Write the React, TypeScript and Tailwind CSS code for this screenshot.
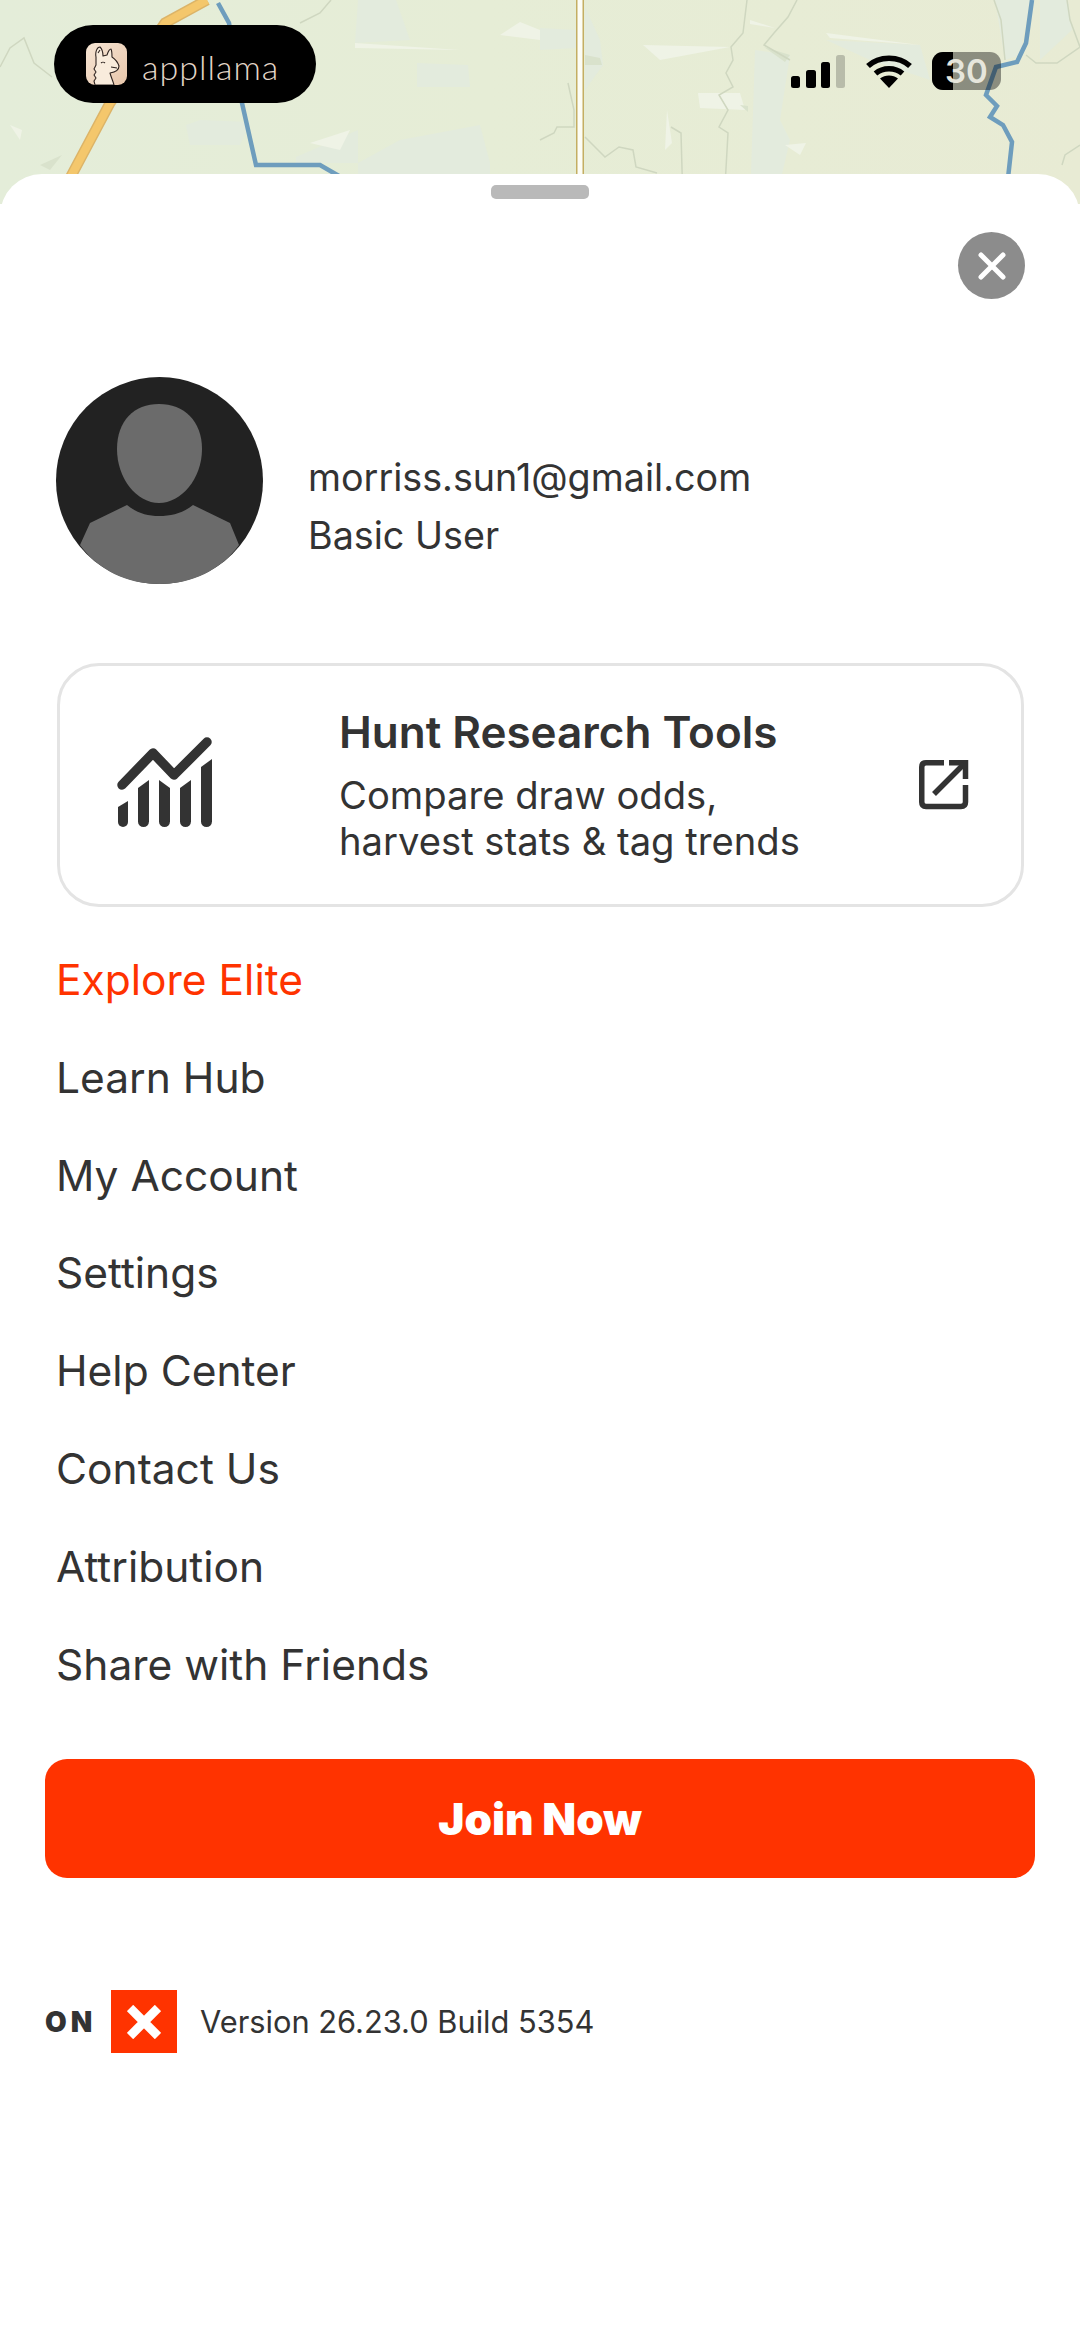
import React from "react";

const font = { fontFamily: "Inter, 'Liberation Sans', sans-serif" };
const items = ["Learn Hub", "My Account", "Settings", "Help Center", "Contact Us", "Attribution", "Share with Friends"];

function MapArt() {
  return (
    <svg className="absolute inset-0 w-full h-full" viewBox="0 0 1080 204" fill="none">
      <defs>
        <linearGradient id="mapbg" x1="0" y1="0" x2="1" y2="0">
          <stop offset="0" stopColor="#e4edd9" />
          <stop offset="0.45" stopColor="#e6edd6" />
          <stop offset="1" stopColor="#e8ebd4" />
        </linearGradient>
      </defs>
      <rect width="1080" height="204" fill="url(#mapbg)" />
      <g fill="#e3ebdd">
        <path d="M358 0L396 0L410 40L355 43Z" />
        <path d="M417 63L468 65L470 87L417 87Z" />
        <path d="M186 125L200 120L250 122L240 145L190 145Z" />
        <path d="M296 157L358 130L358 163L296 163Z" />
        <path d="M358 163L400 140L480 125L490 163L490 204L358 204Z" />
        <path d="M540 28L576 30L576 48L540 50Z" />
        <path d="M585 7L600 40L603 65L585 90Z" />
        <path d="M755 50L790 55L780 120L790 140L775 204L750 204Z" />
        <path d="M826 40L920 45L930 80L870 60Z" />
        <path d="M995 0L1030 0L1020 55L1005 60Z" />
        <path d="M1040 0L1068 0L1072 30L1040 60Z" />
      </g>
      <g fill="#eff3e6">
        <path d="M355 43L460 50L355 48Z" />
        <path d="M310 143L350 130L340 150Z" />
        <path d="M500 35L520 22L540 30L540 40Z" />
        <path d="M643 45L730 47L660 60Z" />
        <path d="M698 93L740 93L745 110L700 108Z" />
        <path d="M667 110L672 143L665 150Z" />
        <path d="M785 145L806 143L800 155Z" />
        <path d="M826 33L920 45L830 38Z" />
        <path d="M750 20L775 28L750 24Z" />
        <path d="M10 125L22 130L20 140Z" />
      </g>
      <g fill="#d9e2cc">
        <path d="M585 55L600 58L602 65L585 65Z" />
        <path d="M764 47L790 55L785 62Z" />
        <path d="M740 105L748 106L748 112Z" />
        <path d="M40 165L62 155L50 170Z" />
      </g>
      <g stroke="#cfd7c0" strokeWidth="1.500">
        <path d="M0 67L10 48L24 38L34 63L52 77" />
        <path d="M331 0L320 13L300 23" />
        <path d="M797 0L788 17L774 33L764 45L790 60" />
        <path d="M747 0L743 33L731 47L733 60L726 73L733 87L719 95L728 110L719 127L728 133L724 204" />
        <path d="M568 83L574 110L574 127L557 127L554 133L540 140" />
        <path d="M585 137L605 157L619 147L633 150L636 167L657 173" />
        <path d="M671 127L681 133L683 204" />
        <path d="M994 0L1001 20L1005 60" />
        <path d="M1067 0L1070 20L1080 47L1057 63L1036 63L1026 55" />
        <path d="M1080 145L1065 155L1062 165" />
      </g>
      <path d="M207 0L165 23L110 103L69 180" stroke="#dcb468" strokeWidth="11" />
      <path d="M207 0L165 23L110 103L69 180" stroke="#f4c76c" strokeWidth="8" />
      <path d="M218 3L229 23L242 103L256 165L320 165L339 176" stroke="#6e9dbd" strokeWidth="4.500" />
      <path d="M1032 0L1026 43L1017 62L996 67L986 95L997 106L990 117L1003 125L1012 142L1008 178" stroke="#6e9dbd" strokeWidth="4.500" />
      <rect x="577" y="0" width="6" height="204" fill="#fdfdf6" />
      <rect x="576" y="0" width="1.500" height="204" fill="#c4ae62" />
      <rect x="582.500" y="0" width="1.500" height="204" fill="#c4ae62" />
    </svg>
  );
}

function LlamaIcon() {
  return (
    <svg width="41" height="42" viewBox="0 0 41 42" className="rounded-[9px] shrink-0">
      <defs>
        <linearGradient id="ll" x1="0" y1="0" x2="1" y2="1">
          <stop offset="0" stopColor="#f7e6d4" />
          <stop offset="1" stopColor="#e8c6ab" />
        </linearGradient>
      </defs>
      <rect width="41" height="42" fill="url(#ll)" />
      <path d="M9 42L8 38L10 35L8 32L10 29L8 26L10 22L10 14C9 9 11 4 14 4C16 6 17 10 17 13L21 12C22 9 24 6 25 6C26 8 26 11 26 14C29 16 32 20 33 23C33 27 30 29 24 30C25 34 27 38 28 42Z" fill="#f9ecdc" stroke="#2f2420" strokeWidth="1.100" strokeLinejoin="round" />
      <path d="M15 20C16 19 18 19 19 20M25 24L31 25M12 10L14 7" stroke="#2f2420" strokeWidth="1.100" fill="none" />
    </svg>
  );
}

function Signal() {
  return (
    <svg width="54" height="34" viewBox="0 0 54 34" className="mr-[21px] mt-[2px] shrink-0">
      <rect x="0" y="22" width="9" height="12" rx="2.500" fill="#000" />
      <rect x="15" y="16" width="10" height="18" rx="2.500" fill="#000" />
      <rect x="30" y="8" width="9" height="26" rx="2.500" fill="#000" />
      <rect x="45" y="1" width="9" height="33" rx="2.500" fill="#000" fillOpacity="0.2" />
    </svg>
  );
}

function Wifi() {
  return (
    <svg width="46" height="34" viewBox="0 0 46 34" className="mr-[20px] mt-[2px] shrink-0" fill="none">
      <path d="M2 12C13 1.500 33 1.500 44 12" stroke="#000" strokeWidth="5.500" />
      <path d="M9.500 19.500C17 13 29 13 36.500 19.500" stroke="#000" strokeWidth="5.500" />
      <path d="M14 24.500C19 20.500 27 20.500 32 24.500L23 34Z" fill="#000" />
    </svg>
  );
}

function ChartIcon() {
  return (
    <svg width="100" height="100" viewBox="0 -5 100 100" fill="#333333">
      <path d="M7 45L38 13L59 35L92 2" fill="none" stroke="#333333" strokeWidth="9.500" strokeLinecap="round" strokeLinejoin="round" />
      <path d="M3 67L13 61V82a5 5 0 0 1-10 0Z" />
      <path d="M23 48L34 40V81.500a5.500 5.500 0 0 1-11 0Z" />
      <path d="M44 40L55 48V81.500a5.500 5.500 0 0 1-11 0Z" />
      <path d="M65 48L76 40V81.500a5.500 5.500 0 0 1-11 0Z" />
      <path d="M86 27L97 19V81.500a5.500 5.500 0 0 1-11 0Z" />
    </svg>
  );
}

function ExternalIcon() {
  return (
    <svg width="50" height="50" viewBox="0 0 50 50" fill="none" stroke="#333333" strokeWidth="5.500">
      <path d="M25 2.750H7Q2.750 2.750 2.750 7V42Q2.750 46.500 7 46.500H42Q46.500 46.500 46.500 42V25" />
      <path d="M30 2.750H46.500V19" />
      <path d="M15 34L45 4" />
    </svg>
  );
}

export default function App() {
  return (
    <div className="relative flex flex-col w-[1080px] h-[2337px] overflow-hidden bg-white text-[#333333]" style={font}>
      <div className="relative h-[204px] shrink-0">
        <MapArt />
        <div className="relative flex justify-between pt-[25px] pl-[54px] pr-[79px]">
          <div className="flex items-center h-[78px] w-[262px] rounded-[39px] bg-black pl-[32px]">
            <LlamaIcon />
            <span className="ml-[15px] pt-[5px] text-[#e3d6c8] text-[34px] leading-none font-light tracking-[1px]" style={{ fontFamily: "Lato, sans-serif" }}>appllama</span>
          </div>
          <div className="flex items-start pt-[27px]">
            <Signal />
            <Wifi />
            <div className="relative flex items-center justify-center w-[69px] h-[38px] rounded-[11px] bg-black/40 overflow-hidden">
              <div className="absolute left-0 top-0 bottom-0 w-[21px] bg-black" />
              <span className="relative text-[33px] leading-none font-semibold text-[#e6e6dc]">30</span>
            </div>
          </div>
        </div>
      </div>

      <div className="relative -mt-[30px] flex-1 flex flex-col bg-white rounded-t-[42px] px-[45px]">
        <div className="self-center w-[98px] h-[14px] rounded-[5px] bg-[#b9b9b9] mt-[11px]" />
        <div className="flex justify-end mt-[33px] pr-[10px]">
          <div className="flex items-center justify-center w-[67px] h-[67px] rounded-full bg-[#8c8c8c]">
            <svg width="28" height="28" viewBox="0 0 28 28" stroke="#fff" strokeWidth="5" strokeLinecap="round">
              <path d="M3 3L25 25M25 3L3 25" />
            </svg>
          </div>
        </div>

        <div className="flex items-center mt-[78px] pl-[11px]">
          <svg width="207" height="207" viewBox="0 0 207 207" className="shrink-0">
            <circle cx="103.500" cy="103.500" r="103.500" fill="#222222" />
            <path d="M103 27C128 27 146 44 146 72C146 102 125 126 103 126C81 126 61 102 61 72C61 44 78 27 103 27Z" fill="#6b6b6b" />
            <path d="M71 128C81 136 91 139 103 139C116 139 127 136 137 128L174 146L183 168C165 193 136 207 103.500 207C71 207 42 193 24 168L34 146Z" fill="#6b6b6b" />
          </svg>
          <div className="ml-[45px] pt-[51px] flex flex-col">
            <div className="text-[37.700px] leading-[58px]">morriss.sun1@gmail.com</div>
            <div className="text-[37.700px] leading-[58px]">Basic User</div>
          </div>
        </div>

        <div className="flex items-center h-[244px] mt-[79px] ml-[12px] mr-[11px] rounded-[42px] border-[3px] border-[#e4e4e4]">
          <div className="ml-[55px] w-[100px] shrink-0 flex">
            <ChartIcon />
          </div>
          <div className="ml-[124px] flex-1 pb-[5px]">
            <div className="text-[44px] leading-[60px] font-semibold">Hunt Research Tools</div>
            <div className="text-[38.200px] leading-[46px] mt-[10px]">Compare draw odds,</div>
            <div className="text-[38.200px] leading-[46px]">harvest stats &amp; tag trends</div>
          </div>
          <div className="mr-[52px] shrink-0 flex">
            <ExternalIcon />
          </div>
        </div>

        <div className="mt-[24px] pl-[11px] flex flex-col">
          <div className="h-[97.800px] flex items-center text-[42.500px] text-[#ff3300]">Explore Elite</div>
          {items.map((t) => (
            <div key={t} className="h-[97.800px] flex items-center text-[42.500px]">{t}</div>
          ))}
        </div>

        <div className="mt-[46px] flex items-center justify-center h-[119px] rounded-[22px] bg-[#ff3300] text-white text-[44px] font-black">
          Join Now
        </div>

        <div className="mt-[112px] flex items-center">
          <span className="w-[50px] text-[28px] leading-none font-black tracking-[4px] whitespace-nowrap">ON</span>
          <div className="ml-[16px] flex items-center justify-center w-[66px] h-[63px] bg-[#ff3300]">
            <svg width="34" height="34" viewBox="0 0 34 34" stroke="#fff" strokeWidth="9">
              <path d="M3 3L31 31M31 3L3 31" />
            </svg>
          </div>
          <span className="ml-[23px] text-[30.800px]">Version 26.23.0 Build 5354</span>
        </div>
      </div>
    </div>
  );
}
